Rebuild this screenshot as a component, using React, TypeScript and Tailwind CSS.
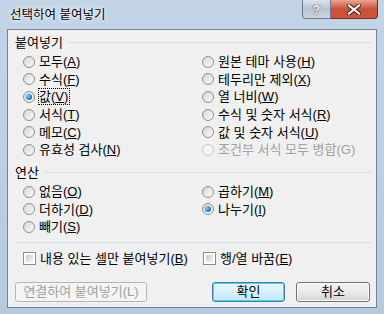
import React from 'react';

const font = { fontFamily: '"Liberation Sans", "Noto Sans CJK KR", sans-serif' };

type Opt = { label: string; key?: string; rest?: string; checked?: boolean; disabled?: boolean; focus?: boolean };

const Radio = ({ checked, disabled }: { checked?: boolean; disabled?: boolean }) => (
  <span
    className={`relative inline-flex items-center justify-center w-[12px] h-[12px] rounded-full border shrink-0 ${
      disabled ? 'border-[#c8cacc] bg-[#f4f4f4]' : 'border-[#8e8f8f] bg-gradient-to-br from-[#d6d6d6] to-[#fbfbfb]'
    }`}
  >
    {checked && (
      <span className="w-[6px] h-[6px] rounded-full bg-[radial-gradient(circle_at_35%_35%,#7fd0ff,#1a6fb0_70%,#0b4a80)]" />
    )}
  </span>
);

const Checkbox = () => (
  <span className="inline-flex w-[13px] h-[13px] border border-[#8e8f8f] bg-white p-[2px] shrink-0">
    <span className="w-full h-full bg-gradient-to-br from-[#cbcbcb] to-[#f5f5f5]" />
  </span>
);

// label text with underlined mnemonic
const Label = ({ o }: { o: Opt }) => (
  <span className={`leading-[15px] ${o.disabled ? 'text-[#a0a0a0]' : 'text-black'} ${o.focus ? 'outline outline-1 outline-dotted outline-black pr-[1px]' : ''}`}>
    {o.label}
    {o.key ? (
      <>
        (<span className="underline underline-offset-[1px]">{o.key}</span>)
      </>
    ) : null}
    {o.rest}
  </span>
);

const Row = ({ o }: { o: Opt }) => (
  <div className="flex items-center h-[17.6px] gap-[4px]">
    <Radio checked={o.checked} disabled={o.disabled} />
    <Label o={o} />
  </div>
);

const Section = ({ title }: { title: string }) => (
  <div className="flex items-center h-[14px] pl-[7px] pr-[5px] gap-[5px]">
    <span>{title}</span>
    <span className="flex-1 h-px bg-[#d5dfe5]" />
  </div>
);

const pasteLeft: Opt[] = [
  { label: '모두', key: 'A' },
  { label: '수식', key: 'F' },
  { label: '값', key: 'V', checked: true, focus: true },
  { label: '서식', key: 'T' },
  { label: '메모', key: 'C' },
  { label: '유효성 검사', key: 'N' },
];
const pasteRight: Opt[] = [
  { label: '원본 테마 사용', key: 'H' },
  { label: '테두리만 제외', key: 'X' },
  { label: '열 너비', key: 'W' },
  { label: '수식 및 숫자 서식', key: 'R' },
  { label: '값 및 숫자 서식', key: 'U' },
  { label: '조건부 서식 모두 병합(G)', disabled: true },
];

export default function App() {
  return (
    <div
      className="w-[384px] h-[314px] overflow-hidden flex flex-col text-[13px] leading-none bg-gradient-to-b from-[#c3d4e7] via-[#bccfe4] to-[#b5c9df]"
      style={font}
    >
      {/* Title bar */}
      <div className="h-[29px] shrink-0 flex items-start">
        <span className="ml-[10px] mt-[9px] text-[12.5px] text-black [text-shadow:0_0_6px_#ffffff,0_0_3px_#ffffff]">선택하여 붙여넣기</span>
        <div className="ml-auto mr-[6px] flex">
          <div className="w-[29px] h-[19px] rounded-bl-[4px] border border-t-0 border-[#6e7b8c] bg-gradient-to-b from-[#dbe3ec] via-[#b6c3d2] to-[#c9d4e0] flex items-center justify-center">
            <span className="text-white font-bold text-[13px] leading-none [text-shadow:0_0_1px_#333,0_0_1px_#333]">?</span>
          </div>
          <div className="w-[47px] h-[19px] rounded-br-[4px] border border-l-0 border-t-0 border-[#6b2c22] bg-gradient-to-b from-[#e8a593] via-[#c8503a] to-[#d5533c] flex items-center justify-center">
            <svg width="14" height="11" viewBox="0 0 14 11">
              <path d="M2 1.5 L12 9.5 M12 1.5 L2 9.5" stroke="#3a1a14" strokeWidth="4" strokeLinecap="square" />
              <path d="M2 1.5 L12 9.5 M12 1.5 L2 9.5" stroke="#ffffff" strokeWidth="2.2" strokeLinecap="square" />
            </svg>
          </div>
        </div>
      </div>

      {/* Client area */}
      <div className="mx-[7px] h-[279px] border border-[#75839a] bg-[#f0f0f0] pt-[5px] text-black">
        <Section title="붙여넣기" />
        <div className="mt-[4px] grid grid-cols-[179px_1fr] pl-[15px]">
          <div>
            {pasteLeft.map((o) => (
              <Row key={o.label} o={o} />
            ))}
          </div>
          <div>
            {pasteRight.map((o) => (
              <Row key={o.label} o={o} />
            ))}
          </div>
        </div>

        <div className="mt-[7.4px]">
          <Section title="연산" />
        </div>
        <div className="mt-[3px] grid grid-cols-[179px_1fr] pl-[15px]">
          <div>
            <Row o={{ label: '없음', key: 'O' }} />
            <Row o={{ label: '더하기', key: 'D' }} />
            <Row o={{ label: '빼기', key: 'S' }} />
          </div>
          <div>
            <Row o={{ label: '곱하기', key: 'M' }} />
            <Row o={{ label: '나누기', key: 'I', checked: true }} />
          </div>
        </div>

        <div className="mt-[6px] ml-[7px] mr-[5px] h-px bg-[#d5dfe5]" />

        <div className="mt-[7px] h-[18px] flex items-center pl-[15px]">
          <div className="w-[180px] flex items-center gap-[4px]">
            <Checkbox />
            <Label o={{ label: '내용 있는 셀만 붙여넣기', key: 'B' }} />
          </div>
          <div className="flex items-center gap-[4px]">
            <Checkbox />
            <Label o={{ label: '행/열 바꿈', key: 'E' }} />
          </div>
        </div>

        {/* Buttons */}
        <div className="mt-[14px] flex items-center pl-[7px] pr-[6px]">
          <button className="w-[132px] h-[20px] rounded-[3px] border border-[#b5b5b5] bg-[#f4f4f4] text-[#a0a0a0]">
            연결하여 붙여넣기(L)
          </button>
          <button className="ml-auto w-[73px] h-[20px] rounded-[3px] border border-[#3c7fb1] bg-gradient-to-b from-[#eaf6fd] via-[#d9f0fc] to-[#bee6fd] shadow-[inset_0_0_0_1px_#48d3ff] text-black">
            확인
          </button>
          <button className="ml-[11px] w-[74px] h-[20px] rounded-[3px] border border-[#707070] bg-gradient-to-b from-[#f2f2f2] via-[#ebebeb] to-[#d3d3d3] shadow-[inset_0_0_0_1px_#fcfcfc] text-black">
            취소
          </button>
        </div>
      </div>
    </div>
  );
}
